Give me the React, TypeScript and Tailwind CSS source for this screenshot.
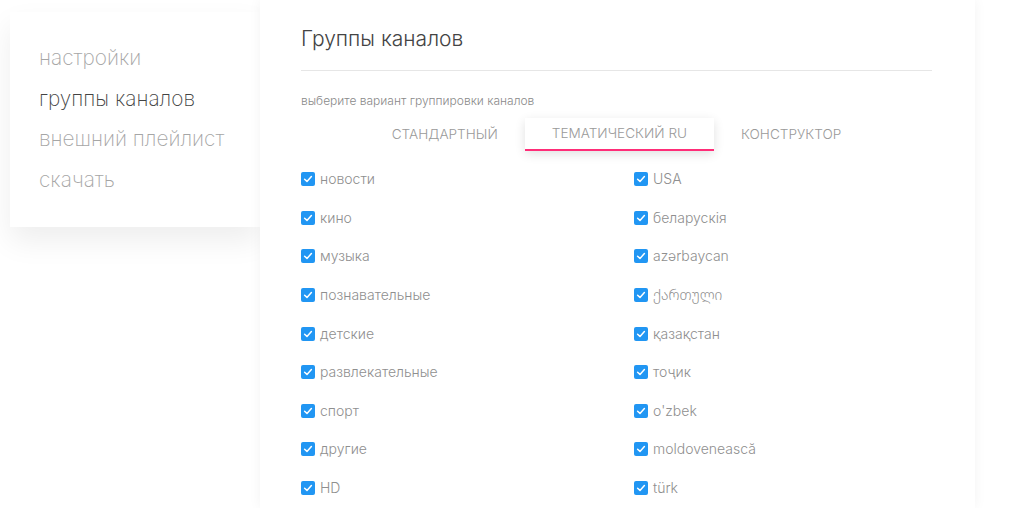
import React from 'react';

const menu = [
  { label: 'настройки', active: false },
  { label: 'группы каналов', active: true },
  { label: 'внешний плейлист', active: false },
  { label: 'скачать', active: false },
];

const tabs = ['Стандартный', 'Тематический RU', 'Конструктор'];

const left = ['новости', 'кино', 'музыка', 'познавательные', 'детские', 'развлекательные', 'спорт', 'другие', 'HD'];
const right = ['USA', 'беларускія', 'azərbaycan', 'ქართული', 'қазақстан', 'тоҷик', "o'zbek", 'moldovenească', 'türk'];

const Check = ({ label }: { label: string }) => (
  <label className="flex items-center gap-[5px] h-[38.6px]">
    <span className="w-[14px] h-[14px] rounded-[2px] bg-[#2196f3] flex items-center justify-center">
      <svg width="10" height="10" viewBox="0 0 10 10" fill="none">
        <path d="M1.6 5.2 L4 7.4 L8.4 2.6" stroke="white" strokeWidth="1.5" strokeLinecap="round" strokeLinejoin="round" />
      </svg>
    </span>
    <span className="text-[14px] font-light text-[#8f8f8f] leading-none">{label}</span>
  </label>
);

export default function App() {
  return (
    <div
      className="h-[508px] w-[1024px] overflow-hidden bg-white flex items-start"
      style={{ fontFamily: 'Inter, "Noto Sans", "Noto Sans Georgian", sans-serif' }}
    >
      {/* sidebar */}
      <nav className="ml-[10px] mt-[12px] w-[250px] bg-white pl-[29px] pt-[26px] pb-[27px] shadow-[0_14px_28px_rgba(0,0,0,0.07)]">
        <ul className="flex flex-col">
          {menu.map((m) => (
            <li
              key={m.label}
              className={`text-[20.8px] font-extralight leading-[40.6px] ${m.active ? 'text-[#444]' : 'text-[#a6a6a6]'}`}
            >
              {m.label}
            </li>
          ))}
        </ul>
      </nav>

      {/* main card */}
      <main className="relative z-10 w-[715px] min-h-[508px] bg-white pl-[41px] pr-[43px] pt-[25px] shadow-[0_0_12px_rgba(0,0,0,0.05)]">
        <h1 className="text-[21px] leading-[28px] text-[#444] font-light">Группы каналов</h1>
        <div className="mt-[17px] h-px bg-[#e6e6e6]" />
        <p className="mt-[22px] text-[12px] leading-[16px] text-[#8a8a8a] font-light">выберите вариант группировки каналов</p>

        <div className="mt-[9px] flex justify-center">
          {tabs.map((t, i) => (
            <div
              key={t}
              className={`h-[33px] px-[27px] flex items-center uppercase text-[13.6px] font-light text-[#9a9a9a] ${
                i === 1 ? 'bg-white border-b-2 border-[#ff2d78] shadow-[0_3px_10px_rgba(0,0,0,0.12)]' : ''
              }`}
            >
              {t}
            </div>
          ))}
        </div>

        <div className="mt-[9px] grid grid-cols-[333px_1fr]">
          <div className="flex flex-col">
            {left.map((l) => (
              <Check key={l} label={l} />
            ))}
          </div>
          <div className="flex flex-col">
            {right.map((r) => (
              <Check key={r} label={r} />
            ))}
          </div>
        </div>
      </main>
    </div>
  );
}
